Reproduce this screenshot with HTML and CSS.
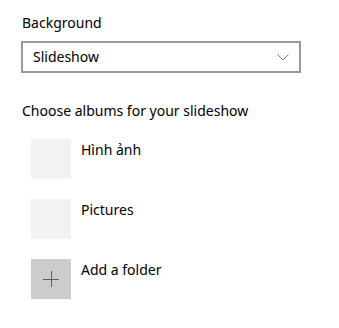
FILE: index.html
```html
<!DOCTYPE html>
<html>
<head>
<meta charset="utf-8">
<link rel="stylesheet" href="styles.css">
</head>
<body>
<div class="page">
  <div class="label">Background</div>
  <div class="select">
    <span class="select-text">Slideshow</span>
    <svg class="chev" width="12" height="7" viewBox="0 0 12 7"><path d="M0.5 0.5 L6 6 L11.5 0.5" fill="none" stroke="#777" stroke-width="1"/></svg>
  </div>
  <div class="section-title">Choose albums for your slideshow</div>
  <div class="albums">
    <div class="album"><div class="thumb"></div><div class="album-name">Hình ảnh</div></div>
    <div class="album"><div class="thumb"></div><div class="album-name">Pictures</div></div>
    <div class="album"><div class="thumb add">
      <svg width="16" height="16" viewBox="0 0 16 16"><path d="M0 8.5 H16 M8.5 0 V16" stroke="#5f5f5f" stroke-width="1"/></svg>
    </div><div class="album-name">Add a folder</div></div>
  </div>
</div>
</body>
</html>
```
FILE: styles.css
```css
html, body { margin: 0; padding: 0; background: #fff; }
body { font-family: "Noto Sans", "Open Sans", sans-serif; font-size: 14px; color: #000; }
.page { padding: 13px 0 0 22px; width: 280px; }
.label { line-height: 20px; height: 20px; }
.select {
  margin-top: 8px; margin-left: -1px;
  box-sizing: border-box; width: 280px; height: 32px;
  border: 2px solid #999; display: flex; align-items: center; justify-content: space-between;
  padding: 0 10px 0 10px;
}
.select-text { line-height: 20px; }
.chev { display: block; margin-top: 1px; }
.section-title { margin-top: 28px; line-height: 20px; }
.albums { display: flex; flex-direction: column; gap: 20px; margin-top: 18px; padding-left: 9px; }
.album { display: flex; gap: 10px; align-items: flex-start; }
.thumb { width: 40px; height: 40px; background: #f2f2f2; display: flex; align-items: center; justify-content: center; }
.thumb.add { background: #cccccc; }
.album-name { line-height: 20px; margin-top: 1px; }
```
